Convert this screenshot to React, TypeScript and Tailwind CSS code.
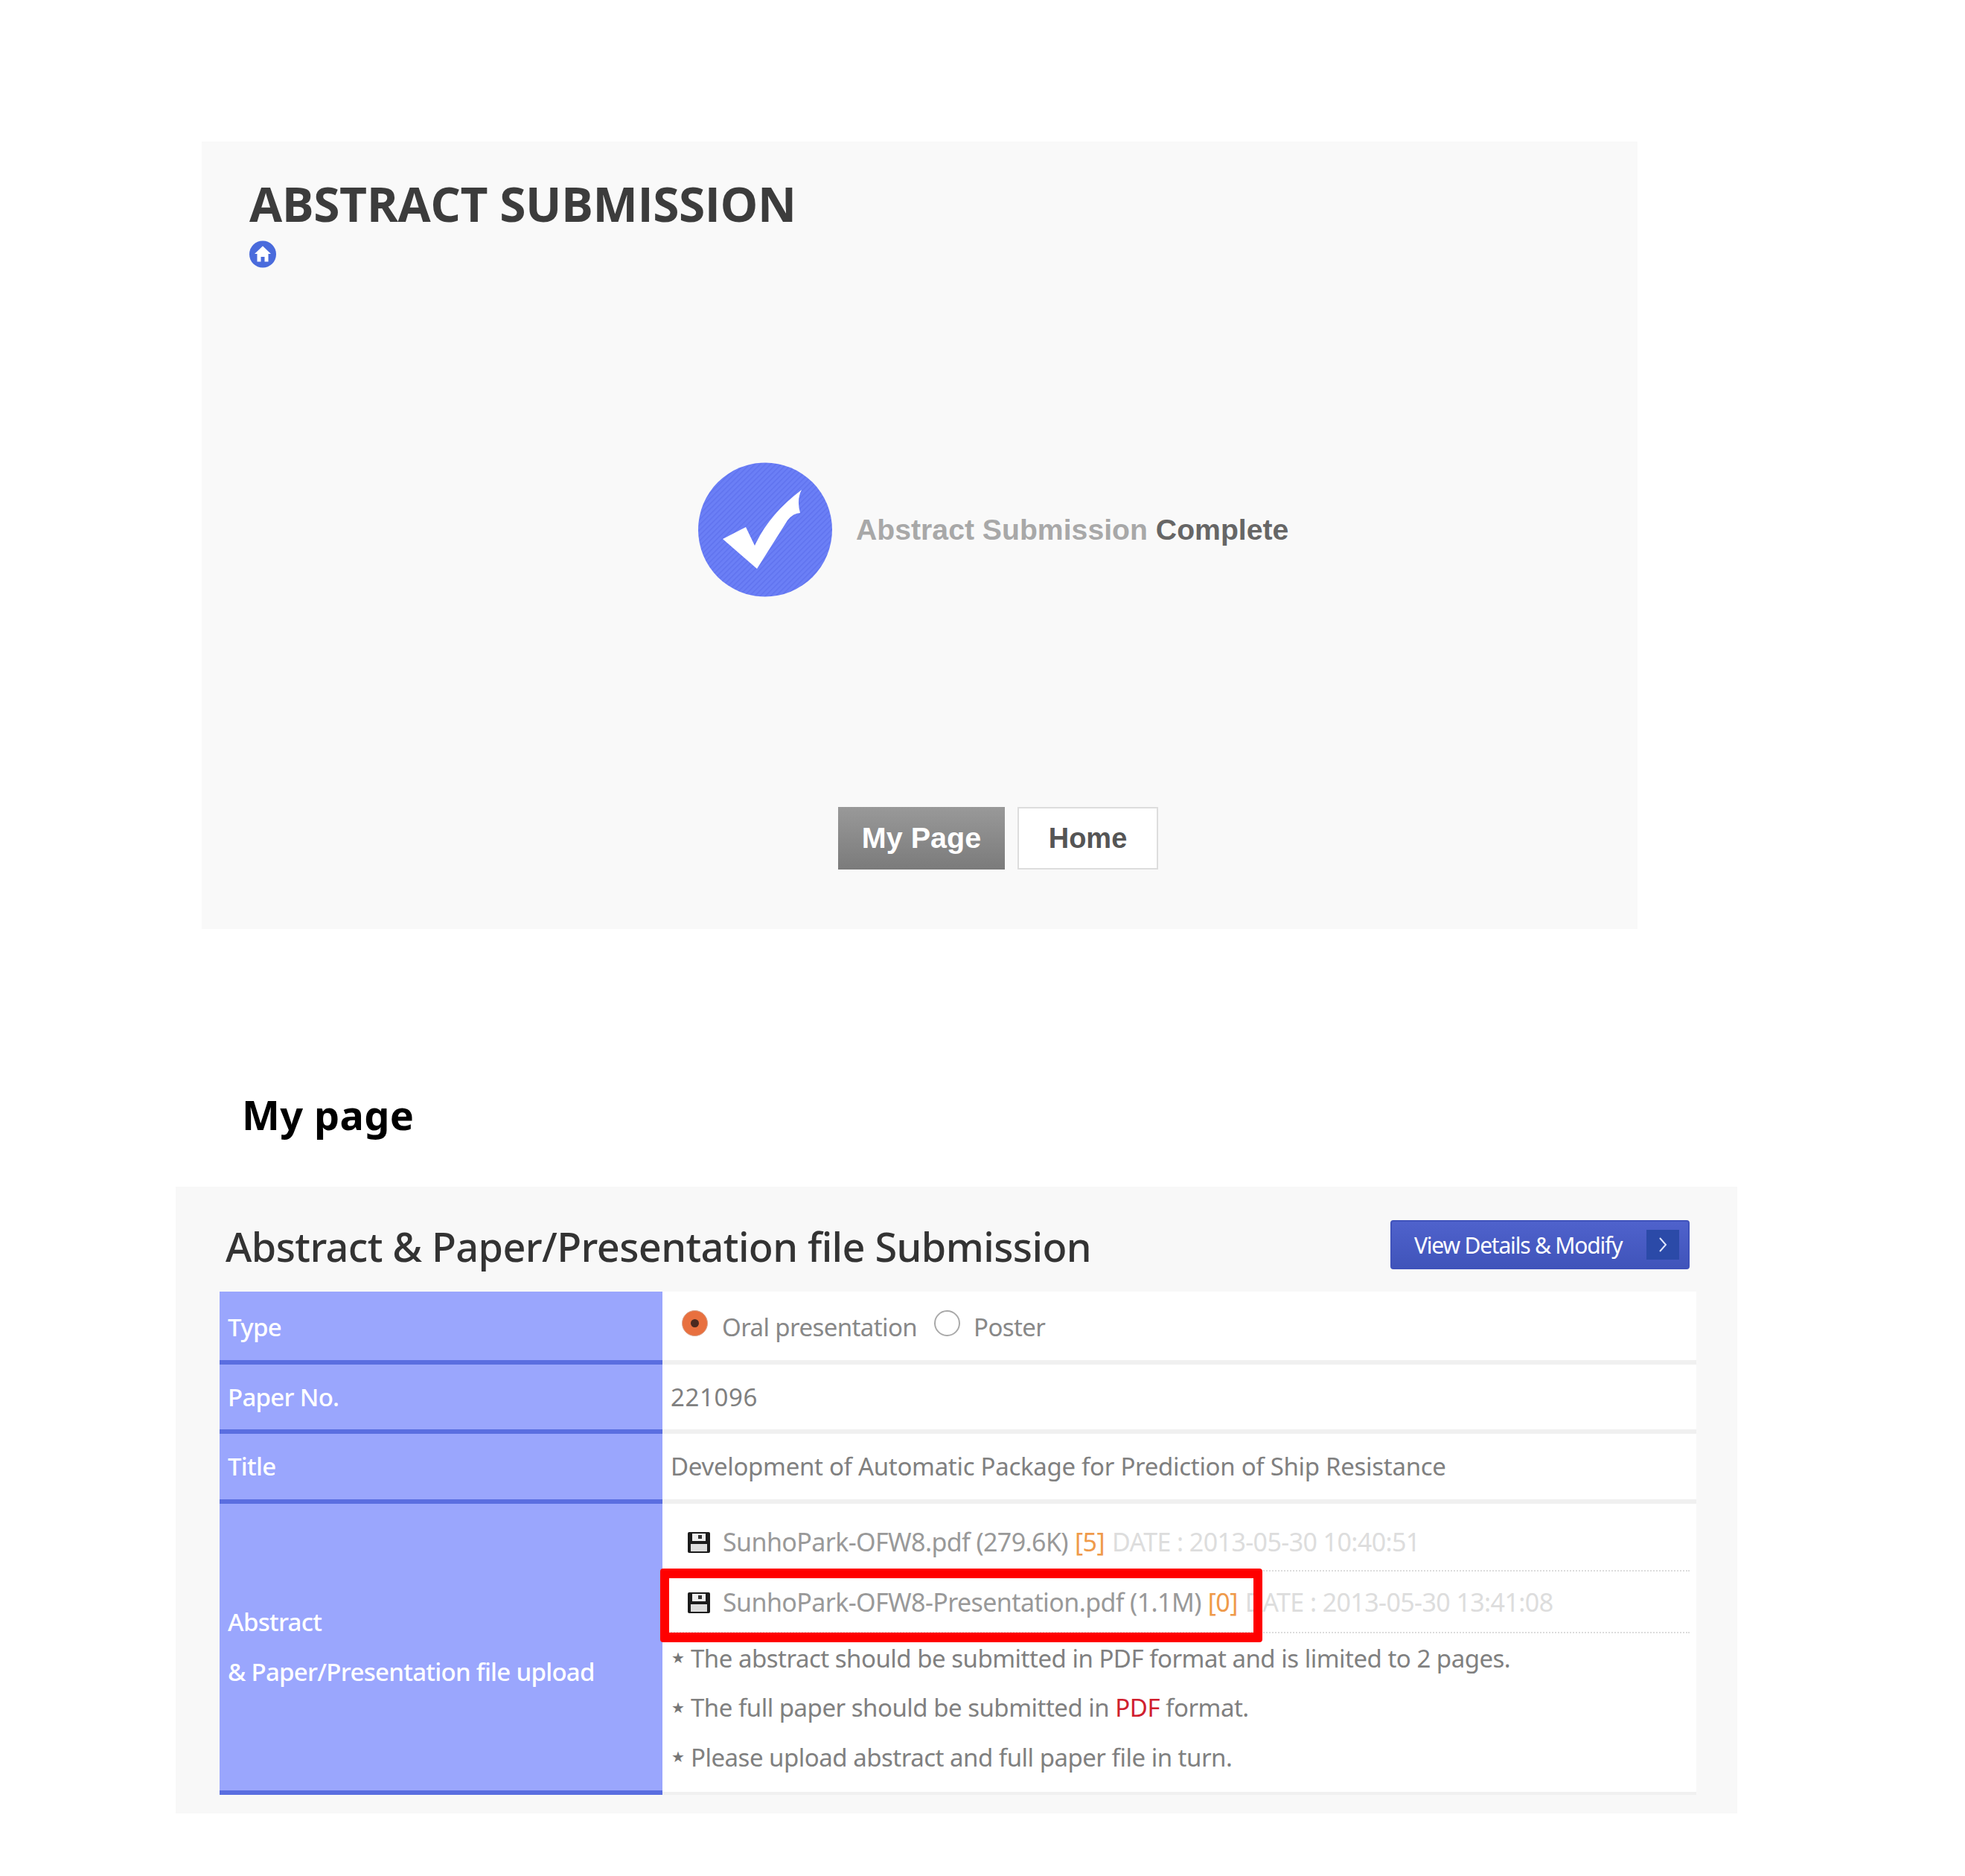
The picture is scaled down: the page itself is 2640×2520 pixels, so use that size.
const sans = "font-['Noto_Sans','Open_Sans',sans-serif]";

function HomeIcon() {
  return (
    <svg viewBox="0 0 36 37" className="h-[37px] w-[36px]">
      <circle cx="18" cy="18.5" r="18" fill="#4a6bdc" />
      <path d="M18 7.5 L29 18 L25.5 18 L25.5 28.5 L20.5 28.5 L20.5 22 L15.5 22 L15.5 28.5 L10.5 28.5 L10.5 18 L7 18 Z" fill="#fff" />
    </svg>
  );
}

function CheckBadge() {
  return (
    <svg viewBox="0 0 180 181" className="h-[181px] w-[180px] shrink-0">
      <defs>
        <pattern id="stripes" width="5" height="5" patternUnits="userSpaceOnUse" patternTransform="rotate(45)">
          <rect width="5" height="5" fill="#6b7ff6" />
          <rect width="1.5" height="5" fill="#5f72ee" />
        </pattern>
      </defs>
      <circle cx="90" cy="90.5" r="90" fill="url(#stripes)" />
      <path d="M33 103 L64 87 L76 112 Q95 70 139 37 Q132 50 137 68 Q128 68 120 78 L79 143 Z" fill="#fff" />
    </svg>
  );
}

function DiskIcon() {
  return (
    <svg viewBox="0 0 32 30" className="h-[30px] w-[32px] shrink-0">
      <rect x="1" y="1" width="30" height="28" rx="2" fill="#1c1c1c" />
      <rect x="7" y="3" width="18" height="10" fill="#eee" />
      <rect x="15" y="5" width="5" height="5" fill="#333" />
      <rect x="5" y="17" width="22" height="10" fill="#ddd" />
    </svg>
  );
}

function Radio({ checked }: { checked?: boolean }) {
  return checked ? (
    <span className="flex h-[35px] w-[35px] items-center justify-center rounded-full bg-[#e8703f] border border-[#d9a58f]">
      <span className="h-[11px] w-[11px] rounded-full bg-[#4a2a20]" />
    </span>
  ) : (
    <span className="h-[35px] w-[35px] rounded-full border-2 border-[#a9a9a9] bg-white" />
  );
}

function Label({ children, className }: { children: React.ReactNode; className: string }) {
  return (
    <div className={`flex w-[595px] shrink-0 flex-col justify-center border-b-[6px] border-[#5a6ee0] bg-[#9aa6fd] pl-[11px] text-[33px] font-medium tracking-[-0.7px] text-white ${className}`}>
      {children}
    </div>
  );
}

function FileRow({ name, count, date, className }: { name: string; count: string; date: string; className: string }) {
  return (
    <div className={`flex items-center border-b-2 border-dotted border-[#dcdcdc] pl-[33px] text-[34px] tracking-[-0.6px] ${className}`}>
      <DiskIcon />
      <span className="ml-[16px] whitespace-nowrap text-[#999]">{name}</span>
      <span className="ml-[9px] whitespace-nowrap text-[#ef9a4a]">{count}</span>
      <span className="ml-[10px] whitespace-nowrap text-[#ddd]">{date}</span>
    </div>
  );
}

function Note({ children }: { children: React.ReactNode }) {
  return (
    <div className="flex h-[66.5px] items-center whitespace-nowrap pl-[12px] tracking-[-0.5px] text-[#808080]">
      <span className="w-[26px] text-[20px] text-[#777]">★</span>
      {children}
    </div>
  );
}

export default function App() {
  return (
    <div className={`min-h-[2520px] w-[2640px] bg-white pt-[190px] ${sans}`}>
      {/* completion panel */}
      <section className="ml-[271px] h-[1058px] w-[1929px] bg-[#f9f9f9] pl-[64px]">
        <h1 className="pt-[42px] font-['Open_Sans',sans-serif] text-[64px] font-bold leading-[84px] tracking-[-0.45px] text-[#3c3c3c]">
          ABSTRACT SUBMISSION
        </h1>
        <div className="mt-[7px]">
          <HomeIcon />
        </div>
        <div className="ml-[603px] mt-[261px] flex items-center gap-[32px]">
          <CheckBadge />
          <p className="pt-[2px] font-['Liberation_Sans',sans-serif] text-[39.2px] font-bold text-[#a8a8a8]">
            Abstract Submission <span className="text-[#666]">Complete</span>
          </p>
        </div>
        <div className="ml-[791px] mt-[282px] flex gap-[17px] font-['Liberation_Sans',sans-serif] text-[38px] font-bold">
          <button className="h-[84px] w-[224px] bg-gradient-to-b from-[#999] to-[#7b7b7b] text-[39.5px] text-white">My Page</button>
          <button className="h-[84px] w-[189px] border-2 border-[#ddd] bg-white text-[#555]">Home</button>
        </div>
      </section>

      <h2 className="ml-[325px] mt-[212px] text-[54px] font-bold leading-[74px] tracking-[0.4px] text-black">My page</h2>

      {/* my page panel */}
      <section className="ml-[236px] mt-[60px] h-[842px] w-[2098px] bg-[#f8f8f8] pl-[59px] pt-[45px]">
        <div className="flex h-[96px] w-[1975px] items-start justify-between pl-[8px]">
          <h3 className="-mt-[2px] text-[54px] font-medium leading-[74px] tracking-[-0.6px] text-[#333]">
            Abstract &amp; Paper/Presentation file Submission
          </h3>
          <button className="flex h-[66px] w-[402px] items-center justify-between rounded-[4px] border-2 border-[#3f52bb] bg-gradient-to-b from-[#4f62cc] to-[#4054ba] pl-[30px] pr-[12px] text-[30px] tracking-[-1.2px] text-white">
            View Details &amp; Modify
            <span className="flex h-[40px] w-[44px] items-center justify-center bg-[#2b4aa8]">
              <svg viewBox="0 0 16 24" className="h-[24px] w-[16px]">
                <path d="M4 3 L12 12 L4 21" fill="none" stroke="#dfe6ff" strokeWidth="2" />
              </svg>
            </span>
          </button>
        </div>

        <div className="relative w-[1984px] text-[33px] tracking-[-0.3px] text-[#808080]">
          <div className="flex h-[98px]">
            <Label className="pt-[3px]">Type</Label>
            <div className="flex grow items-center border-b-[6px] border-[#f0f0f0] bg-white pl-[26px] pt-[3px] tracking-[-0.6px] text-[#888]">
              <span className="-mt-[10px] flex"><Radio checked /></span>
              <span className="ml-[19px]">Oral presentation</span>
              <span className="-mt-[10px] ml-[23px] flex"><Radio /></span>
              <span className="ml-[18px]">Poster</span>
            </div>
          </div>
          <div className="flex h-[93px]">
            <Label className="">Paper No.</Label>
            <div className="flex grow items-center border-b-[6px] border-[#f0f0f0] bg-white pl-[11px] tracking-[0.6px]">221096</div>
          </div>
          <div className="flex h-[94px]">
            <Label className="">Title</Label>
            <div className="flex grow items-center border-b-[6px] border-[#f0f0f0] bg-white pl-[11px]">
              Development of Automatic Package for Prediction of Ship Resistance
            </div>
          </div>
          <div className="flex h-[391px]">
            <Label className="gap-[15px] leading-[52px]">
              <span>Abstract</span>
              <span>&amp; Paper/Presentation file upload</span>
            </Label>
            <div className="grow border-b-[4px] border-[#f0f0f0] bg-white pb-[10px] pr-[9px]">
              <FileRow className="h-[91px] pt-[14px]" name="SunhoPark-OFW8.pdf (279.6K)" count="[5]" date="DATE : 2013-05-30 10:40:51" />
              <FileRow className="h-[83px] pt-[2px]" name="SunhoPark-OFW8-Presentation.pdf (1.1M)" count="[0]" date="DATE : 2013-05-30 13:41:08" />
              <Note>The abstract should be submitted in PDF format and is limited to 2 pages.</Note>
              <Note>
                The full paper should be submitted in&nbsp;<span className="text-[#d0202e]">PDF</span>&nbsp;format.
              </Note>
              <Note>Please upload abstract and full paper file in turn.</Note>
            </div>
          </div>
          {/* red highlight drawn over the second file row */}
          <div className="absolute left-[592px] top-[372px] h-[99px] w-[809px] rounded-[4px] border-x-[12px] border-y-[13px] border-[#ff0000]" />
        </div>
      </section>
    </div>
  );
}
